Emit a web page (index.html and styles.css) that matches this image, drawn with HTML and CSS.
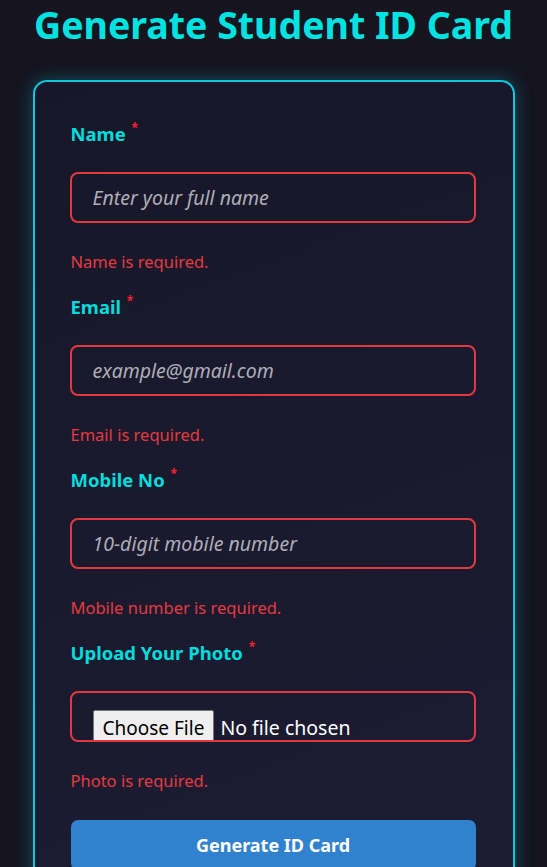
FILE: index.html
```html
<!DOCTYPE html>
<html lang="en">
<head>
<meta charset="utf-8">
<title>Generate Student ID Card</title>
<link rel="stylesheet" href="styles.css">
</head>
<body>
<main class="page">
  <h1 class="title">Generate Student ID Card</h1>
  <form class="card" novalidate>
    <div class="field">
      <label class="label" for="name">Name <span class="req">*</span></label>
      <input class="input" id="name" type="text" placeholder="Enter your full name">
      <p class="error">Name is required.</p>
    </div>
    <div class="field">
      <label class="label" for="email">Email <span class="req">*</span></label>
      <input class="input" id="email" type="email" placeholder="example@gmail.com">
      <p class="error">Email is required.</p>
    </div>
    <div class="field">
      <label class="label" for="mobile">Mobile No <span class="req">*</span></label>
      <input class="input" id="mobile" type="tel" placeholder="10-digit mobile number">
      <p class="error">Mobile number is required.</p>
    </div>
    <div class="field">
      <label class="label" for="photo">Upload Your Photo <span class="req">*</span></label>
      <input class="input file" id="photo" type="file" accept="image/*">
      <p class="error">Photo is required.</p>
    </div>
    <button class="submit" type="submit">Generate ID Card</button>
  </form>
</main>
</body>
</html>
```
FILE: styles.css
```css
html, body {
  margin: 0;
  padding: 0;
}
body {
  background: #15141f;
  font-family: "Noto Sans", "Open Sans", sans-serif;
  color: #fff;
  min-height: 100vh;
}
.page {
  display: flex;
  flex-direction: column;
  align-items: center;
}
.title {
  margin: 0;
  font-size: 37.5px;
  line-height: 50px;
  font-weight: 700;
  color: #00e3e0;
  text-align: center;
}
.card {
  box-sizing: border-box;
  width: 482px;
  margin-top: 30px;
  padding: 40px 37px 40px 35px;
  border: 2px solid #12c6dc;
  border-radius: 14px;
  background: linear-gradient(160deg, #181729 0%, #1c1c33 100%);
  box-shadow: 0 0 18px rgba(0, 200, 220, 0.35);
  display: flex;
  flex-direction: column;
}
.field {
  display: flex;
  flex-direction: column;
  margin-bottom: 22px;
}
.label {
  font-size: 18.5px;
  line-height: 24px;
  font-weight: 700;
  color: #00dcdc;
  margin-bottom: 26px;
  padding-left: 1px;
}
.req {
  color: #ff1f2f;
  font-size: 12px;
  vertical-align: top;
  position: relative;
  top: -6px;
  margin-left: 1px;
}
.input {
  box-sizing: border-box;
  height: 51px;
  width: 100%;
  padding: 0 21px;
  border: 2px solid #e03a40;
  border-radius: 8px;
  background: transparent;
  font-family: inherit;
  font-size: 19.5px;
  color: #fff;
  outline: none;
}
.input::placeholder {
  color: #aeaeb8;
  font-style: italic;
}
.file {
  padding: 17px 21px 0;
  overflow: hidden;
  font-size: 19.5px;
}
.file::file-selector-button {
  font-family: inherit;
  font-size: 19px;
  padding: 4px 9px;
  margin-right: 6px;
  background: #efefef;
  color: #000;
  border: 1px solid #767676;
  border-radius: 2px;
}
.error {
  margin: 28px 0 0;
  padding-left: 1px;
  font-size: 16.5px;
  line-height: 22px;
  color: #e53b40;
}
.submit {
  height: 50px;
  margin-top: 6px;
  margin-left: 1px;
  border: none;
  border-radius: 7px;
  background: #3182ce;
  color: #fff;
  font-family: inherit;
  font-size: 18px;
  font-weight: 700;
  cursor: pointer;
}
```
